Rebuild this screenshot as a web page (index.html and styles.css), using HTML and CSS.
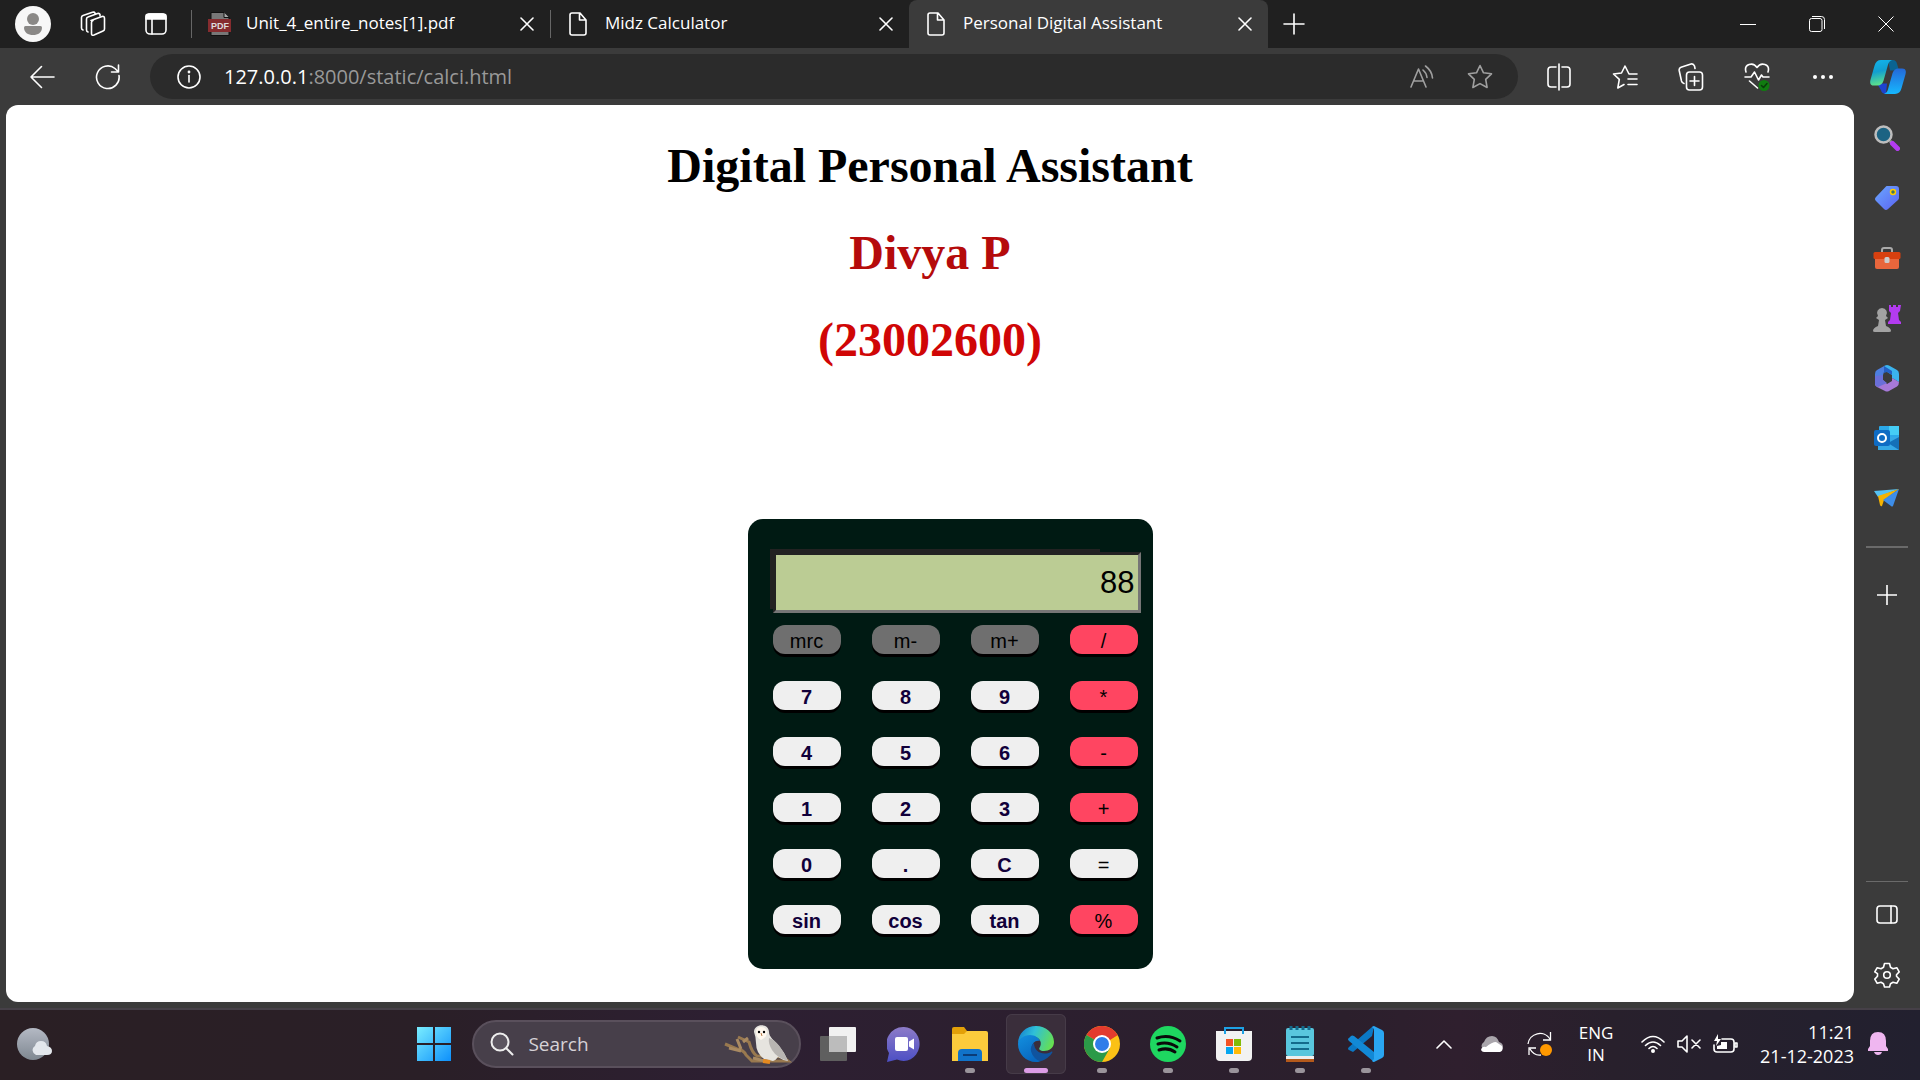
FILE: index.html
```html
<!DOCTYPE html>
<html lang="en">
<head>
<meta charset="utf-8">
<title>Personal Digital Assistant</title>
<link rel="stylesheet" href="styles.css">
</head>
<body>
<header class="tabstrip">
  <div class="profile">
    <button class="ic" aria-label="Profile"><svg width="36" height="36" viewBox="0 0 36 36"><circle cx="18" cy="18" r="18" fill="#f7f7f7"/><circle cx="18" cy="13" r="6" fill="#8a8886"/><path d="M9 21.500q0-1.500 1.500-1.500h15q1.500 0 1.500 1.500c0 5-4 7.500-9 7.500s-9-2.500-9-7.500z" fill="#8a8886"/></svg></button>
    <button class="ic" aria-label="Workspaces"><svg class="ln" width="26" height="26" viewBox="0 0 26 26"><path d="M11 9.500 22 5.500q2.500-.6 2.500 2V18q0 1.500-1.500 2l-9 4q-2.500 1-2.500-1.500V11.500q0-1.500 1.500-2z"/><path d="M20 5V3.500q-.5-1.500-2.500-1L8 6Q6.500 6.500 6.500 8v11q0 1.500 1.500 2M15 3V2q-.5-1.200-2.500-.7L3 4.500Q1.500 5 1.500 6.500V17q0 1.500 1.500 2"/></svg></button>
    <button class="ic" aria-label="Tab actions"><svg class="ln" width="22" height="22" viewBox="0 0 22 22"><rect x="1" y="1" width="20" height="20" rx="4"/><path d="M1 3q0-2 3-2h14q3 0 3 2v3H1z" fill="#fff"/><path d="M7 6v15"/></svg></button>
  </div>
  <nav class="tabs">
    <div class="tab">
      <svg width="24" height="24" viewBox="0 0 24 24"><path d="M3 .5h13l5 5v18H3z" fill="#777" stroke="#111"/><path d="M16 .5v5h5" fill="#aaa" stroke="#111"/><path d="M0 7h23v13H0z" fill="#862c2f"/><text x="12" y="17" class="pdf">PDF</text></svg>
      <a href="#">Unit_4_entire_notes[1].pdf</a>
      <button aria-label="Close tab"><svg class="ln" width="14" height="14" viewBox="0 0 14 14"><path d="m1 1 12 12M13 1 1 13"/></svg></button>
    </div>
    <div class="tab">
      <svg class="ln" width="24" height="24" viewBox="0 0 24 24"><path d="M5 1h8l6 7v13q0 2-2 2H5q-2 0-2-2V3q0-2 2-2zM12.500 1v7H19"/></svg>
      <a href="#">Midz Calculator</a>
      <button aria-label="Close tab"><svg class="ln" width="14" height="14" viewBox="0 0 14 14"><path d="m1 1 12 12M13 1 1 13"/></svg></button>
    </div>
    <div class="tab active">
      <svg class="ln" width="24" height="24" viewBox="0 0 24 24"><path d="M5 1h8l6 7v13q0 2-2 2H5q-2 0-2-2V3q0-2 2-2zM12.500 1v7H19"/></svg>
      <a href="#">Personal Digital Assistant</a>
      <button aria-label="Close tab"><svg class="ln" width="14" height="14" viewBox="0 0 14 14"><path d="m1 1 12 12M13 1 1 13"/></svg></button>
    </div>
    <button class="newtab" aria-label="New tab"><svg class="ln" width="22" height="22" viewBox="0 0 22 22"><path d="M1 11h20M11 1v20"/></svg></button>
  </nav>
  <div class="winctl">
    <button aria-label="Minimize"><svg class="thin" width="16" height="16" viewBox="0 0 16 16"><path d="M0 8.500h16"/></svg></button>
    <button aria-label="Restore"><svg class="thin" width="16" height="16" viewBox="0 0 16 16"><rect x=".5" y="2.500" width="12.500" height="13" rx="2"/><path d="M3 .5h9.500q3 0 3 3V13"/></svg></button>
    <button aria-label="Close"><svg class="thin" width="16" height="16" viewBox="0 0 16 16"><path d="m.5.5 15 15M15.500.5l-15 15"/></svg></button>
  </div>
</header>

<div class="toolbar">
  <div class="nav">
    <button aria-label="Back"><svg class="ln" width="26" height="24" viewBox="0 0 26 24"><path d="M25 12H2M12.500 1.500 2 12l10.500 10.500"/></svg></button>
    <button aria-label="Refresh"><svg class="ln" width="26" height="26" viewBox="0 0 26 26"><path d="M24 11.500A11.300 11.300 0 1 1 20 4.500L23.500 8M23.500 1v7h-7"/></svg></button>
  </div>
  <div class="address">
    <button aria-label="Site information"><svg class="ln" width="24" height="24" viewBox="0 0 24 24"><circle cx="12" cy="12" r="11"/><path d="M12 10.500V17"/><circle cx="12" cy="7" r=".6"/></svg></button>
    <div class="url" role="textbox" aria-label="Address">127.0.0.1<span>:8000/static/calci.html</span></div>
    <button class="dim" aria-label="Read aloud"><svg class="ln" width="24" height="24" viewBox="0 0 24 24"><path d="M1 22 8.500 4 16 22M3.500 16h10M13 5q3.500 3 4 7.500M15.500 1q6.500 5 7 12"/></svg></button>
    <button class="dim" aria-label="Favorite"><svg class="ln" width="26" height="26" viewBox="0 0 26 26"><path d="m13 1.500 3.500 7.300 8 1-5.800 5.600 1.400 8.100L13 19.600l-7.100 3.900 1.400-8.100L1.500 9.800l8-1z"/></svg></button>
  </div>
  <div class="tools">
    <button aria-label="Split screen"><svg class="ln" width="24" height="28" viewBox="0 0 24 28"><path d="M9 4H4Q1 4 1 7v14q0 3 3 3h5M15 4h5q3 0 3 3v14q0 3-3 3h-5M12 1v26"/></svg></button>
    <button aria-label="Favorites"><svg class="ln" width="26" height="26" viewBox="0 0 26 26"><path d="M25 10h-8l-4-8-3.500 7-8 1 5.800 5.400L5.800 24l6.200-3.500M16 15h9M16 20.500h9"/></svg></button>
    <button aria-label="Collections"><svg class="ln" width="26" height="28" viewBox="0 0 26 28"><rect x="8.500" y="9" width="16" height="18" rx="3"/><path d="M12 18h9M16.500 13.500v9M6 20.500Q4 20 3.500 18L1.200 7.500Q.8 5 3 4.200L13 1q2.500-.5 3.500 2l.5 2.500"/></svg></button>
    <button aria-label="Browser essentials"><svg class="ln" width="26" height="28" viewBox="0 0 26 28"><path d="M2 9C-.5 1 9-1.500 13 4.500 17-1.500 26.500 1 24 9M1 14h6l3.500-5 4 8 3-5 1.500 2h6M5.500 18l8 7"/><circle cx="20" cy="22.500" r="5.500" fill="#107c10" stroke="none"/><path d="m17.500 22.500 2 2 3.500-4" stroke="#0a3d0a"/></svg></button>
    <button aria-label="Settings and more"><svg width="22" height="6" viewBox="0 0 22 6" fill="#fff"><circle cx="3" cy="3" r="2"/><circle cx="11" cy="3" r="2"/><circle cx="19" cy="3" r="2"/></svg></button>
    <button class="copilot" aria-label="Copilot"><svg width="36" height="34" viewBox="0 0 36 36" preserveAspectRatio="none"><defs><linearGradient id="c1" x2=".2" y2="1"><stop stop-color="#12b5ee"/><stop offset=".5" stop-color="#129fd0"/><stop offset="1" stop-color="#5be08c"/></linearGradient><linearGradient id="c2" x2="0" y2="1"><stop stop-color="#2468d8"/><stop offset="1" stop-color="#16b8ff"/></linearGradient></defs><path d="M18 0h5q3 0 4 4l2 7h-9z" fill="#0a6391"/><path d="M7 25h10l-1 11q-4 0-5-4z" fill="#1d43d0"/><path d="M11 0h11q-3 1-4 5l-4.500 17q-1.500 5-6 5H4q-5 0-3.500-6L4.500 6Q6 0 11 0z" fill="url(#c1)"/><path d="M25 36H14q3-1 4-5l4.500-17q1.500-5 6-5H32q5 0 3.500 6l-4 15q-1.500 6-6.500 6z" fill="url(#c2)"/></svg></button>
  </div>
</div>

<div class="body">
  <main class="page">
    <h1>Digital Personal Assistant</h1>
    <h1 class="name">Divya P</h1>
    <h1 class="reg">(23002600)</h1>
    <form class="calc">
      <div class="screen"><input type="text" value="88" aria-label="Result"></div>
      <div class="keys">
        <button type="button" class="mem">mrc</button><button type="button" class="mem">m-</button><button type="button" class="mem">m+</button><button type="button" class="op">/</button>
        <button type="button">7</button><button type="button">8</button><button type="button">9</button><button type="button" class="op">*</button>
        <button type="button">4</button><button type="button">5</button><button type="button">6</button><button type="button" class="op">-</button>
        <button type="button">1</button><button type="button">2</button><button type="button">3</button><button type="button" class="op">+</button>
        <button type="button">0</button><button type="button">.</button><button type="button">C</button><button type="button" class="eq">=</button>
        <button type="button">sin</button><button type="button">cos</button><button type="button">tan</button><button type="button" class="op">%</button>
      </div>
    </form>
  </main>
  <aside class="sidebar">
    <button aria-label="Search"><svg width="26" height="26" viewBox="0 0 26 26"><path d="m16 16 3 3" stroke="#999" stroke-width="3"/><path d="m18.500 18.500 5 5" stroke="#b43cf0" stroke-width="5" stroke-linecap="round"/><circle cx="9.500" cy="9.500" r="8" fill="#1b6383" stroke="#bdbdbd" stroke-width="2.500"/></svg></button>
    <button aria-label="Shopping"><svg width="26" height="26" viewBox="0 0 26 26"><defs><linearGradient id="tg" x2="1" y2="1"><stop stop-color="#6aa7ff"/><stop offset="1" stop-color="#5b63f2"/></linearGradient></defs><path d="M13 1h9q3 0 3 3v9q0 1-1 2L14 24q-2 2-4 0l-8-8q-2-2 0-4L11.500 2q.5-1 1.500-1z" fill="url(#tg)"/><circle cx="19" cy="7" r="2.500" fill="#475" stroke="#fc0" stroke-width="1.500"/></svg></button>
    <button aria-label="Tools"><svg width="28" height="24" viewBox="0 0 28 24"><path d="M9 7V4q0-2 2-2h6q2 0 2 2v3" fill="none" stroke="#aaa" stroke-width="2"/><path d="M2 11h24v10q0 2-2 2H4q-2 0-2-2z" fill="#e8663c"/><rect x=".5" y="6" width="27" height="7" rx="1.500" fill="#d8400f"/><rect x="11.500" y="11" width="5" height="6" rx="1.500" fill="#ccc"/></svg></button>
    <button aria-label="Games"><svg width="28" height="28" viewBox="0 0 28 28"><path d="M16 1h2v2h2V1h3v2h2V1h3l-1 6-2 2 1 7 2 2v2H15v-2l2-2 1-7-2-2z" fill="#b33bf0"/><path d="M9 4a5 5 0 0 1 4 8l2 2-3 2 1 6q5 2 5 5 0 1-2 1H2q-2 0-2-1 0-3 5-5l1-6-3-2 2-2a5 5 0 0 1 4-8z" fill="#a3a3a3"/></svg></button>
    <button aria-label="Microsoft 365"><svg width="26" height="28" viewBox="0 0 26 28"><path d="M11 1.500 3 6Q1 7 1 10v11l8-5v-5l1-3z" fill="#4d7fe0"/><path d="M11 1.500q2-1 4 0l8 4.500q2 1 2 4v8l-7-4v-3l-8-5V3z" fill="#3bb4ee"/><path d="M10 2v7l3-1 5 3V7z" fill="#2461c4"/><path d="m9 16-8 4q0 2 2 3l8 4q2 1 4 0l8-4.500q2-1.500 2-4.500l-7-4v3l-5 3z" fill="#a679d8"/><path d="M1 20v-8l8-1v5l4 3-9 4q-3-1-3-3z" fill="#6a6fd8"/></svg></button>
    <button aria-label="Outlook"><svg width="26" height="26" viewBox="0 0 26 26"><rect x="5" y="1" width="20" height="18" rx="1" fill="#2ba8e8"/><path d="M15 1h10v9H15z" fill="#45cdf5"/><path d="M4 12h21v13H4z" fill="#35a8e6"/><path d="M25 12v13L14 18z" fill="#1470b8"/><rect y="5" width="16" height="16" rx="2" fill="#0f6cc4"/><circle cx="8" cy="13" r="4" fill="none" stroke="#fff" stroke-width="2"/></svg></button>
    <button aria-label="Drop"><svg width="28" height="20" viewBox="0 0 28 20"><path d="M1 3 26 1 5 9z" fill="#56c2f2"/><path d="m5 8 21-7-15 11-2 6q-1 1-2-1z" fill="#f5b301"/><path d="m10 12 16-11-6 17q-1 1-2 0z" fill="#3d8de8"/></svg></button>
    <hr>
    <button class="add" aria-label="Add"><svg class="ln" width="20" height="20" viewBox="0 0 20 20"><path d="M0 10h20M10 0v20"/></svg></button>
    <div class="bottom">
      <hr>
      <button aria-label="Side pane"><svg class="ln" width="22" height="20" viewBox="0 0 22 20"><rect x="1" y="1" width="20" height="17" rx="3"/><path d="M15 1v17"/></svg></button>
      <button aria-label="Settings"><svg class="ln" width="26" height="26" viewBox="0 0 26 26"><path d="M10.500 1.500h5l1 3.800 2.500 1.400 3.800-1 2.400 4.200-2.700 2.800v1.600l2.700 2.800-2.400 4.200-3.800-1-2.500 1.400-1 3.300h-5l-1-3.300L7 20.300l-3.800 1-2.400-4.200 2.700-2.800v-2.600L.8 9.900l2.400-4.200 3.800 1 2.500-1.400z"/><circle cx="13" cy="13" r="3.300"/></svg></button>
    </div>
  </aside>
</div>

<footer class="taskbar">
  <div class="widgets"><button class="ic" aria-label="Weather"><svg width="36" height="34" viewBox="0 0 36 34"><defs><linearGradient id="mn" x2="0" y2="1"><stop stop-color="#b4b9c4"/><stop offset="1" stop-color="#7f8891"/></linearGradient></defs><circle cx="16" cy="17" r="16" fill="url(#mn)"/><path d="M19 28a5 5 0 0 1-1-9q1-5 6-5t6 5q5 1 5 5t-5 4z" fill="#e3e7ec"/></svg></button></div>
  <div class="apps">
    <button class="app" aria-label="Start"><svg width="36" height="36" viewBox="0 0 36 36"><defs><linearGradient id="w" gradientUnits="userSpaceOnUse" x2="36" y2="36"><stop stop-color="#7df0ff"/><stop offset="1" stop-color="#0a8dfb"/></linearGradient></defs><path d="M1 1h16v16H1zM19 1h16v16H19zM1 19h16v16H1zM19 19h16v16H19z" fill="url(#w)"/></svg></button>
    <label class="search">
      <svg width="24" height="24" viewBox="0 0 24 24" fill="#5c5560" stroke="#eee" stroke-width="2" stroke-linecap="round"><circle cx="10" cy="10" r="8.500"/><path d="m16.500 16.500 6 6"/></svg>
      <input type="text" placeholder="Search" aria-label="Search">
      <svg width="70" height="40" viewBox="0 0 70 40"><path d="m2 20 12 5q7 1 9 6l6 6h36l-5-4-26-1q-5-3-8-14L15 13" fill="none" stroke="#99794f" stroke-width="3"/><path d="m6 24 12 3M18 25l-4-10M30 34l12 3M20 18l5-4" stroke="#a98a62" stroke-width="3"/><path d="M31 8C31-1 46-1 46 8c0 5 5 8 10 14q6 7 9 15-6-1-10-4-2 3-5 4l-9-2q-8-6-8-16 0-6-2-11z" fill="#e6e4df"/><path d="M46 14q10 3 19 23-11-3-16-11-4-7-3-12z" fill="#b8b5b2"/><path d="M33 8q0-5 5-5t6 5q0 5-6 8-5-3-5-8z" fill="#fff8ee"/><circle cx="36" cy="8" r="1.200"/><circle cx="41" cy="8" r="1.200"/><path d="m38 9 1 3" stroke="#b87842"/><path d="m40 37 7 1" stroke="#e58a20" stroke-width="4"/></svg>
    </label>
    <button class="app" aria-label="Task view"><svg width="36" height="36" viewBox="0 0 36 36"><rect x="9" y="1" width="27" height="25" rx="1" fill="#f1f1f1"/><rect y="10" width="27" height="25" rx="1" fill="#5f5f5f"/><path d="M9 10h18v16H9z" fill="#bcbcbc"/></svg></button>
    <button class="app" aria-label="Chat"><svg width="34" height="36" viewBox="0 0 34 36"><defs><linearGradient id="ch" x2="0" y2="1"><stop stop-color="#8d7bc8"/><stop offset="1" stop-color="#4c4fc4"/></linearGradient></defs><path d="M17 1a16 17 0 1 1-7 32.500L0 36l2-9A17 17 0 0 1 17 1z" fill="url(#ch)"/><rect x="8" y="11" width="13" height="14" rx="2" fill="#fff"/><path d="m22 15.500 5-3v11l-5-3z" fill="#fff"/></svg></button>
    <button class="app run" aria-label="File Explorer"><svg width="36" height="36" viewBox="0 0 36 36"><path d="M0 3q0-2 2-2h10l3 4v5H0z" fill="#e3a008"/><path d="M0 8h12l3-3h19q2 0 2 2v28H0z" fill="#fccb3c"/><path d="M6 35V27q0-4 4-4h16q4 0 4 4v8z" fill="#1173c9"/><path d="M11 29h14" stroke="#0b3c77" stroke-width="2"/></svg></button>
    <button class="app run current" aria-label="Microsoft Edge"><svg width="36" height="36" viewBox="0 0 36 36"><defs><linearGradient id="e1" y1=".3" x2="1" y2=".6"><stop stop-color="#1683d0"/><stop offset=".4" stop-color="#2fc0d8"/><stop offset="1" stop-color="#67e04f"/></linearGradient><linearGradient id="e2" x2=".5" y2="1"><stop stop-color="#1390df"/><stop offset="1" stop-color="#0868c0"/></linearGradient></defs><path d="M0 18C0 7 8 0 18 0s18 7 18 16c0 6-5 9-10 9-4 0-6-2-4-4 3-6-2-11-9-11C6 10 1 13 0 18z" fill="url(#e1)"/><path d="M0 18c0-5 6-9 12-9 5 0 9 3 10 6-5-1-8 2-8 7 0 6 4 11 9 13-2 1-4 1-5 1C8 36 0 28 0 18z" fill="url(#e2)"/><path d="M16 17q-4 3-3 8c1 5 6 10 10 10 5-1 9-5 11-8 1-1 0-2-1-1-8 4-17 0-17-9z" fill="#10539e"/></svg></button>
    <button class="app run" aria-label="Google Chrome"><svg width="36" height="36" viewBox="0 0 36 36"><circle cx="18" cy="18" r="18" fill="#fbc116"/><path d="M18 18 2.400 9A18 18 0 0 1 33.600 9z" fill="#e33b2e"/><path d="M18 18 2.400 9A18 18 0 0 0 18 36l8-14z" fill="#2b9a48"/><path d="M18 9h15.600L26 14z" fill="#e33b2e"/><circle cx="18" cy="18" r="9" fill="#fff"/><circle cx="18" cy="18" r="7" fill="#2f7de9"/></svg></button>
    <button class="app run" aria-label="Spotify"><svg width="36" height="36" viewBox="0 0 36 36"><circle cx="18" cy="18" r="18" fill="#1ed760"/><path d="M7 12q12-4 23 3M8 18q10-3 19 3M9 24q9-3 16 2" fill="none" stroke="#0a0a0a" stroke-width="3" stroke-linecap="round"/></svg></button>
    <button class="app run" aria-label="Microsoft Store"><svg width="36" height="36" viewBox="0 0 36 36"><path d="M9 8V2h18v6" fill="none" stroke="#1da1e4" stroke-width="2"/><path d="M0 5h36v26q0 4-4 4H4q-4 0-4-4z" fill="#f2f2f2"/><path d="M9 5v3M27 5v3" stroke="#1da1e4" stroke-width="2"/><path d="M10 13h7v7h-7z" fill="#f35325"/><path d="M18 13h7v7h-7z" fill="#81bc06"/><path d="M10 21h7v7h-7z" fill="#05a6f0"/><path d="M18 21h7v7h-7z" fill="#ffba08"/></svg></button>
    <button class="app run" aria-label="Notepad"><svg width="28" height="36" viewBox="0 0 28 36"><rect y="2" width="28" height="28" rx="2" fill="#59c6dd"/><path d="M0 30h28v3H0z" fill="#eee"/><path d="M0 33h28v3H0z" fill="#b4591b"/><path d="M5 11h18M5 17h18M5 23h18" stroke="#136b8b" stroke-width="2"/><path d="M5 0v4M11 0v4M17 0v4M23 0v4" stroke="#136b8b" stroke-width="3"/></svg></button>
    <button class="app run" aria-label="Visual Studio Code"><svg width="36" height="36" viewBox="0 0 36 36"><path d="m26 1-2 9L5 26 1 24q-2-1 0-3L24 1q1-1 2-1z" fill="#0b78c4"/><path d="M26 36 1 15q-2-2 0-3l2-2q1-1 3 0l20 16z" fill="#1289d6"/><path d="m26 0 8 4q2 1 2 3v22q0 2-2 3l-8 4q-1 0-2-1l2-2V3l-2-2z" fill="#2aa6f2"/></svg></button>
  </div>
  <div class="tray">
    <button class="ic chev" aria-label="Hidden icons"><svg class="ln" width="16" height="10" viewBox="0 0 16 10"><path d="m1 9 7-7 7 7"/></svg></button>
    <button class="ic cloud" aria-label="OneDrive"><svg width="24" height="17" viewBox="0 0 24 17"><path d="M6 15A5 5 0 0 1 5 6q2-6 8-6 5 0 7 6 4 1 4 5t-5 5z" fill="#a9a5ab"/><path d="M2 14q1-4 5-3 6-5 10-5l6 4q2 6-4 6H5q-2 0-3-2z" fill="#fff"/></svg></button>
    <button class="ic sync" aria-label="Update"><svg width="26" height="26" viewBox="0 0 26 26"><path d="M1 13A12 12 0 0 1 23 8M23.500 1v8H16M2 24v-7h7M3 18q4 7 11 6" fill="none" stroke="#fff" stroke-width="1.300"/><circle cx="19" cy="19" r="6" fill="#ff9800"/></svg></button>
    <button class="lang">ENG<br>IN</button>
    <button class="status" aria-label="Network, volume and battery">
      <svg class="ln" width="24" height="18" viewBox="0 0 24 18"><path d="M1 7q11-11 22 0M4.500 10.500q7.500-7 15 0M8 13.500q4-4 8 0"/><circle cx="12" cy="16" r="1.200" fill="#fff"/></svg>
      <svg class="ln" width="24" height="18" viewBox="0 0 24 18"><path d="M1 6v6h4l5 5V1L5 6zM15 5l8 8M23 5l-8 8"/></svg>
      <svg class="ln" width="25" height="20" viewBox="0 0 25 20"><path d="M9 5h9q3 0 3 3v7q0 3-3 3H4q-3 0-3-3v-4"/><path d="M22 9h2v4h-2z"/><path d="M8 8h6v7H4v-3l4-1z" fill="#fff" stroke="none"/><path d="M5 0 1 7h3L3 12l5-7H5z" fill="#fff" stroke="none"/></svg>
    </button>
    <button class="clock">11:21<br>21-12-2023</button>
    <button class="ic bell" aria-label="Notifications"><svg width="20" height="24" viewBox="0 0 20 24"><path d="M10 0q8 0 8 9v5l2 3v2H0v-2l2-3V9q0-9 8-9z" fill="#efb6f0"/><path d="M6 20h8q-1 3-4 3t-4-3z" fill="#efb6f0"/></svg></button>
  </div>
</footer>
</body>
</html>
```
FILE: styles.css
```css
* { box-sizing: border-box; }

body {
  margin: 0;
  min-height: 100vh;
  display: flex;
  flex-direction: column;
  background: #3b3b3b;
  color: #fff;
  font-family: "Open Sans", "Noto Sans", sans-serif;
}

button {
  display: flex;
  align-items: center;
  justify-content: center;
  padding: 0;
  border: 0;
  background: none;
  color: inherit;
  font: inherit;
}

svg { display: block; flex: none; }

.ln {
  fill: none;
  stroke: #fff;
  stroke-width: 1.6;
  stroke-linecap: round;
  stroke-linejoin: round;
}

.thin { fill: none; stroke: #fff; stroke-width: 1; }

/* Tab strip */
.tabstrip {
  display: flex;
  height: 48px;
  background: #202020;
}

.profile {
  display: flex;
  align-items: center;
  gap: 29px;
  padding: 0 24px 0 15px;
}

.profile .ic:last-child { margin-left: 10px; }

.tabs {
  display: flex;
  align-items: center;
  flex: 1;
  min-width: 0;
}

.tab {
  display: flex;
  align-items: center;
  gap: 14px;
  flex: 0 1 359px;
  min-width: 0;
  height: 28px;
  padding: 0 16px;
  border-left: 1px solid #666;
  font-size: 17px;
  line-height: 22px;
}

.tab a {
  flex: 1;
  padding-bottom: 2px;
  color: #fff;
  text-decoration: none;
  white-space: nowrap;
  overflow: hidden;
}

.tab.active {
  height: 48px;
  border: 0;
  border-radius: 8px 8px 0 0;
  background: #3b3b3b;
}

.pdf {
  font: bold 9px "Liberation Sans", sans-serif;
  fill: #ddd;
  text-anchor: middle;
}

.newtab { width: 52px; height: 48px; }

.winctl { display: flex; }
.winctl button { width: 69px; height: 48px; }

/* Toolbar */
.toolbar {
  display: flex;
  align-items: center;
  height: 57px;
}

.nav { display: flex; padding: 0 9px; }
.nav button { width: 66px; height: 45px; }

.address {
  display: flex;
  align-items: center;
  flex: 1;
  height: 45px;
  padding: 0 9px 0 10px;
  border-radius: 23px;
  background: #2b2b2b;
}

.address button { width: 58px; height: 45px; }
.dim { opacity: 0.55; }

.url {
  flex: 1;
  padding-left: 6px;
  font-size: 20px;
  white-space: nowrap;
}

.url span { color: #999; }

.tools { display: flex; padding-left: 8px; }
.tools button { width: 66px; height: 45px; }
.tools .copilot { width: 64px; }

/* Page and sidebar */
.body {
  display: flex;
  flex: 1;
}

.page {
  flex: 1;
  margin: 0 0 6px 6px;
  padding: 33px 0 32px;
  border-radius: 12px;
  background: #fff;
  color: #000;
}

.page h1 {
  margin: 0 0 32px;
  font: bold 48px/55px "Liberation Serif", serif;
  text-align: center;
}

.page .name { color: #b50b0b; }
.page .reg { color: #d00606; }

.calc {
  width: 405px;
  height: 450px;
  margin: 152px auto 0;
  padding: 30px 22px 0;
  border-radius: 15px;
  background: #001a13;
  position: relative;
  left: 20px;
  font: 20px "Liberation Sans", sans-serif;
}

.screen {
  width: 330px;
  height: 60px;
  padding: 3px 0 0 3px;
  background: #222;
}

.screen input {
  display: block;
  width: 368px;
  height: 61px;
  padding: 0 3px;
  border: 3px solid;
  border-color: #222 #767676 #767676 #222;
  border-radius: 0;
  background: #bbcc94;
  font: 31px "Liberation Sans", sans-serif;
  text-align: right;
}

.keys {
  display: grid;
  grid-template-columns: repeat(4, 68px);
  gap: 27px 31px;
  padding: 16px 0 0 3px;
}

.keys button {
  height: 29px;
  padding-top: 3px;
  border-radius: 12px;
  background: #efefef;
  box-shadow: 0 3px 0 #000;
  color: #11003a;
  font-weight: bold;
}

.keys .mem { background: #6f6f6f; color: #000; font-weight: normal; }
.keys .op { background: #ff4561; color: #000; font-weight: normal; }
.keys .eq { color: #000; font-weight: normal; }

.sidebar {
  display: flex;
  flex-direction: column;
  width: 66px;
  padding: 3px 0 3px;
}

.sidebar button { width: 66px; height: 60px; }

.sidebar hr {
  width: 42px;
  height: 2px;
  margin: 18px auto 0;
  border: 0;
  background: #6a6a6a;
}

.sidebar .add { margin-top: 17px; }

.bottom { margin-top: auto; }
.bottom hr { height: 1px; margin: 0 auto 3px; }

/* Taskbar */
.taskbar {
  display: flex;
  align-items: center;
  height: 72px;
  padding-bottom: 2px;
  border-top: 2px solid #464048;
  background: linear-gradient(90deg, #2a1f24 0%, #2a1f27 22%, #2d1f32 38%, #2b1f2c 70%, #2f1f2e 76%, #28202c 84%, #22202f 100%);
}

.widgets {
  flex: 406 1 0;
  padding-left: 17px;
}

.apps { display: flex; align-items: center; }

.app {
  position: relative;
  width: 60px;
  height: 60px;
  margin: 0 3px;
  border-radius: 6px;
}

.run::after {
  content: "";
  position: absolute;
  bottom: 1px;
  left: calc(50% - 5px);
  width: 10px;
  height: 5px;
  border-radius: 3px;
  background: #9a949b;
}

.current { background: #3a2e3b; box-shadow: inset 0 0 0 1px #463b48; }
.current::after { left: 18px; width: 24px; background: #dc9ce6; }

.search {
  display: flex;
  align-items: center;
  width: 329px;
  height: 48px;
  margin: 0 4px 0 5px;
  padding: 0 6px 0 16px;
  border: 2px solid #5a505c;
  border-radius: 24px;
  background: #473f4a;
}

.search input {
  flex: 1;
  min-width: 0;
  padding: 0 0 0 14px;
  border: 0;
  background: none;
  color: #fff;
  font: 19px "Open Sans", sans-serif;
}

.search input::placeholder { color: #d6d2d7; opacity: 1; }

.tray {
  display: flex;
  align-items: center;
  justify-content: flex-end;
  flex: 516 1 0;
  padding-right: 32px;
  font-size: 17px;
  line-height: 24px;
}

.cloud { margin-left: 27px; }
.sync { margin-left: 24px; }
.lang { width: 66px; margin-left: 10px; line-height: 22px; }
.status { gap: 12px; margin-left: 12px; }
.clock { width: 100px; margin-left: 16px; font-size: 18px; text-align: right; justify-content: flex-end; }
.bell { margin-left: 14px; }
```
